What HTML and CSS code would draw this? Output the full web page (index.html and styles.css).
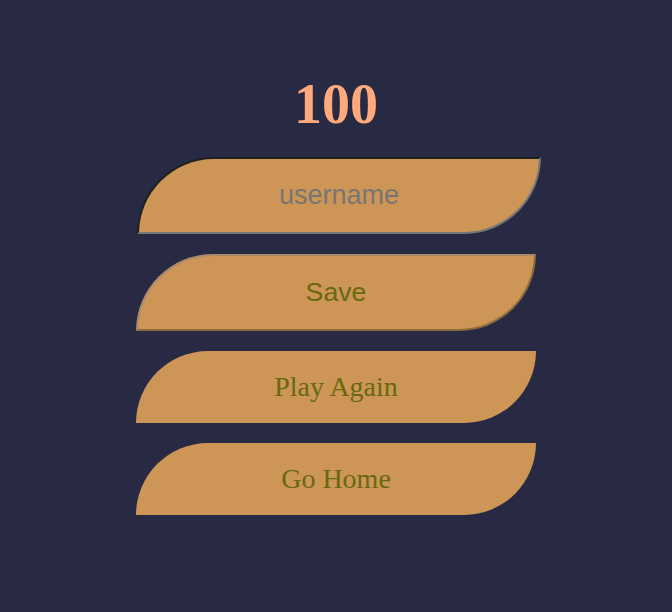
FILE: index.html
```html
<!DOCTYPE html>
<html lang="en">
<head>
<meta charset="utf-8">
<title>Game Over</title>
<link rel="stylesheet" href="styles.css">
</head>
<body>
<main class="panel">
  <h1 class="score">100</h1>
  <input class="name-input" type="text" placeholder="username">
  <button class="btn save-btn" type="button">Save</button>
  <a class="btn link-btn" href="#">Play Again</a>
  <a class="btn link-btn" href="#">Go Home</a>
</main>
</body>
</html>
```
FILE: styles.css
```css
html, body {
  margin: 0;
  padding: 0;
}

body {
  background: #282a43;
  min-height: 612px;
}

.panel {
  width: 400px;
  margin: 0 auto;
  padding-top: 72px;
  display: flex;
  flex-direction: column;
  align-items: flex-start;
  gap: 20px;
}

.score {
  align-self: stretch;
  margin: 0 0 1px 0;
  text-align: center;
  font-family: "Liberation Serif", "Times New Roman", serif;
  font-weight: bold;
  font-size: 56px;
  line-height: 64px;
  color: #ffa97c;
}

.name-input {
  box-sizing: border-box;
  width: 404px;
  height: 77px;
  margin: 0 0 0 1px;
  padding: 0;
  background: #cd9556;
  border: 2px inset #767676;
  border-radius: 100px 0;
  font-family: "Liberation Sans", Arial, sans-serif;
  font-size: 27px;
  text-align: center;
  color: #333;
  outline: none;
}

.name-input::placeholder {
  color: #777672;
}

.btn {
  box-sizing: border-box;
  width: 400px;
  background: #cd9556;
  color: #68690f;
  border-radius: 100px 0;
  display: flex;
  align-items: center;
  justify-content: center;
  text-decoration: none;
}

.save-btn {
  height: 77px;
  padding: 0;
  border-width: 2px;
  border-style: solid;
  border-color: #a98a6f #8e6a3f #8e6a3f #a98a6f;
  font-family: "Liberation Sans", Arial, sans-serif;
  font-size: 26.67px;
}

.link-btn {
  height: 72px;
  font-family: "Liberation Serif", "Times New Roman", serif;
  font-size: 28px;
}
```
